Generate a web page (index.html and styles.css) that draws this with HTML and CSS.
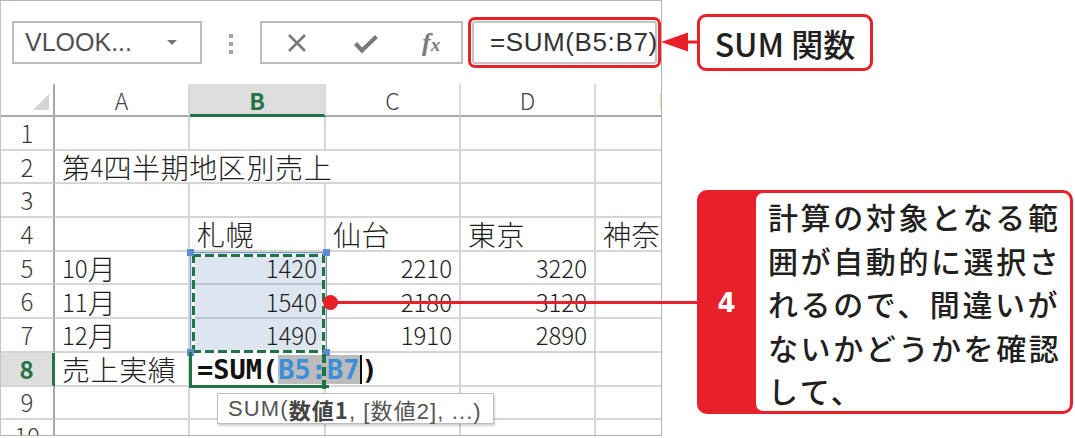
FILE: index.html
```html
<!DOCTYPE html>
<html lang="ja">
<head>
<meta charset="utf-8">
<link rel="stylesheet" href="styles.css">
</head>
<body>
<div class="page">
  <div class="excel">
    <div class="fbar">
      <div class="namebox"><span>VLOOK...</span><span class="dd"></span></div>
      <div class="grip"><i></i><i></i><i></i></div>
      <div class="btns">
        <svg class="ic-x" width="20" height="18" viewBox="0 0 20 18"><path d="M2 1 L18 17 M18 1 L2 17" stroke="#7a7a7a" stroke-width="2.6" fill="none"/></svg>
        <svg class="ic-ok" width="26" height="20" viewBox="0 0 26 20"><path d="M2.5 9.5 L9 16.5 L23.5 2.5" stroke="#7a7a7a" stroke-width="4.2" fill="none"/></svg>
        <span class="fx"><i>f</i><i class="x">x</i></span>
      </div>
      <div class="formula">=SUM(B5:B7)</div>
    </div>
    <div class="gridwrap">
      <div class="grid">
        <div class="h corner"><span class="tri"></span></div>
        <div class="h">A</div>
        <div class="h on">B</div>
        <div class="h">C</div>
        <div class="h">D</div>
        <div class="h">E</div>

        <div class="r">1</div><div class="c"></div><div class="c"></div><div class="c"></div><div class="c"></div><div class="c"></div>

        <div class="r">2</div><div class="c wide">第<span class="d">4</span>四半期地区別売上</div><div class="c"></div><div class="c"></div>

        <div class="r">3</div><div class="c"></div><div class="c"></div><div class="c"></div><div class="c"></div><div class="c"></div>

        <div class="r">4</div><div class="c"></div><div class="c">札幌</div><div class="c">仙台</div><div class="c">東京</div><div class="c">神奈川</div>

        <div class="r">5</div><div class="c"><span class="d">10</span>月</div><div class="c n sel">1420</div><div class="c n">2210</div><div class="c n">3220</div><div class="c"></div>

        <div class="r">6</div><div class="c"><span class="d">11</span>月</div><div class="c n sel">1540</div><div class="c n">2180</div><div class="c n">3120</div><div class="c"></div>

        <div class="r">7</div><div class="c"><span class="d">12</span>月</div><div class="c n sel">1490</div><div class="c n">1910</div><div class="c n">2890</div><div class="c"></div>

        <div class="r on">8</div><div class="c">売上実績</div><div class="c edit"><span class="ftext">=SUM(<span class="hl">B5:B7</span><span class="caret"></span>)</span></div><div class="c"></div><div class="c"></div><div class="c"></div>

        <div class="r">9</div><div class="c"></div><div class="c"></div><div class="c"></div><div class="c"></div><div class="c"></div>

        <div class="r">10</div><div class="c"></div><div class="c"></div><div class="c"></div><div class="c"></div><div class="c"></div>
      </div>

      <div class="range">
        <span class="ant top"></span><span class="ant bottom"></span><span class="ant left"></span><span class="ant right"></span>
        <span class="hd tl"></span><span class="hd tr"></span><span class="hd bl"></span><span class="hd br"></span>
      </div>
      <div class="active"></div>
      <div class="ant-edit"></div>
      <div class="tip">SUM(<b>数値1</b>, [数値2], ...)</div>
    </div>
  </div>

  <svg class="arrow" width="40" height="25" viewBox="0 0 40 25"><polygon points="1,12 28,2.5 28,21.5" fill="#e8202a"/><rect x="27" y="10.5" width="11" height="3" fill="#e8202a"/></svg>
  <div class="label">SUM 関数</div>

  <div class="lead"></div>
  <div class="callout">
    <div class="tab">4</div>
    <div class="ctext">計算の対象となる範<br>囲が自動的に選択さ<br>れるので、間違いが<br>ないかどうかを確認<br>して、</div>
  </div>
</div>
</body>
</html>
```
FILE: styles.css
```css
* { box-sizing: border-box; margin: 0; padding: 0; }
body { margin: 0; background: #fff; }

.page {
  position: relative;
  width: 1075px;
  height: 438px;
  overflow: hidden;
  background: #fff;
  font-family: "Noto Sans CJK JP", sans-serif;
}

/* ---------- Excel panel ---------- */
.excel {
  width: 662px;
  height: 436px;
  border: 1px solid #b3b3b3;
  border-left-color: #b9cbbf;
  display: flex;
  flex-direction: column;
  background: #fff;
}

.fbar {
  flex: none;
  height: 83px;
  display: flex;
  align-items: flex-start;
  padding: 20px 0 0 11px;
}

.namebox {
  width: 190px;
  height: 43px;
  border: 2px solid #bdbdbd;
  display: flex;
  align-items: center;
  padding-left: 11px;
  font-family: "Liberation Sans", sans-serif;
  font-size: 25px;
  color: #505050;
}
.dd {
  margin-left: auto;
  margin-right: 23px;
  width: 0;
  height: 0;
  border-left: 5px solid transparent;
  border-right: 5px solid transparent;
  border-top: 5px solid #777;
}

.grip {
  margin: 13px 0 0 27px;
  display: flex;
  flex-direction: column;
  gap: 4px;
}
.grip i { display: block; width: 4px; height: 4px; background: #a3a3a3; }

.btns {
  margin-left: 27px;
  width: 203px;
  height: 43px;
  border: 2px solid #bdbdbd;
  display: flex;
  align-items: center;
  padding-left: 25px;
}
.ic-x { margin-top: 1px; }
.ic-ok { margin-left: 46px; margin-top: 3px; }
.fx {
  margin-left: 43px;
  font-family: "Liberation Serif", serif;
  font-weight: bold;
  color: #7a7a7a;
  font-size: 26px;
  line-height: 1;
}
.fx .x { font-size: 19px; }

.formula {
  margin-left: 9px;
  width: 185px;
  height: 43px;
  border: 2px solid #c4c4c4;
  outline: 3px solid #e8202a;
  outline-offset: 1px;
  border-radius: 3px;
  display: flex;
  align-items: center;
  padding-left: 16px;
  font-family: "Liberation Sans", sans-serif;
  font-size: 26px;
  letter-spacing: 0.6px;
  color: #333;
}

/* ---------- grid ---------- */
.gridwrap {
  position: relative;
  flex: none;
  height: 351px;
  overflow: hidden;
}
.grid {
  display: grid;
  grid-template-columns: 54px 135px 136px 135px 135px 140px;
  grid-template-rows: 33px repeat(10, 33.7px);
  width: 700px;
}
.grid > div {
  display: flex;
  align-items: center;
  line-height: 1;
  white-space: nowrap;
  min-width: 0;
}

.h {
  justify-content: center;
  border-right: 2px solid #dadada;
  border-bottom: 2px solid #a9a9a9;
  font-size: 23px;
  font-weight: 300;
  color: #444;
  padding-top: 2px;
}
.h.on {
  background: #dedede;
  border-bottom: 3px solid #217346;
  color: #217346;
  font-weight: 700;
}
.corner { position: relative; border-right: 2px solid #a9a9a9; }
.tri {
  position: absolute;
  right: 4px;
  bottom: 5px;
  width: 0;
  height: 0;
  border-left: 16px solid transparent;
  border-bottom: 16px solid #d3d3d3;
}

.r {
  justify-content: center;
  border-right: 2px solid #a9a9a9;
  border-bottom: 2px solid #d6d6d6;
  font-size: 24px;
  font-weight: 300;
  color: #3a3a3a;
}
.r.on {
  background: #dedede;
  border-right: 3px solid #217346;
  color: #217346;
  font-weight: 700;
}

.c {
  border-right: 2px solid #d6d6d6;
  border-bottom: 2px solid #d6d6d6;
  padding-left: 7px;
  font-size: 28px;
  font-weight: 300;
  letter-spacing: 0.6px;
  color: #1e1e1e;
  padding-top: 1px;
}
.c .d { font-size: 24px; letter-spacing: 0; }
.c.wide { grid-column: span 3; }
.c.n {
  justify-content: flex-end;
  padding-right: 7px;
  font-size: 24px;
  letter-spacing: 0;
}
.c.sel { background: #dde5f0; border-bottom-color: #bac4d2; }

.c.edit { position: relative; overflow: visible; padding-left: 7px; }
.ftext {
  position: relative;
  z-index: 2;
  background: #fff;
  font-family: "DejaVu Sans Mono", monospace;
  font-weight: bold;
  font-size: 27px;
  letter-spacing: 0;
  color: #111;
  line-height: 29px;
  display: inline-flex;
  align-items: center;
}
.hl { background: #bcbcbc; color: #3b8ed8; }
.caret { display: inline-block; width: 2px; height: 29px; background: #111; }

/* selection overlay B5:B7 */
.range {
  position: absolute;
  left: 189px;
  top: 168px;
  width: 137px;
  height: 101px;
  border: 1px solid #6f96cf;
  z-index: 3;
}
.ant { position: absolute; }
.ant.top, .ant.bottom {
  left: 1px; right: 1px; height: 3px;
  background: repeating-linear-gradient(90deg, #217346 0 9px, #fff 9px 13px);
}
.ant.top { top: 1px; }
.ant.bottom { bottom: -1px; }
.ant.left, .ant.right {
  top: 1px; bottom: 1px; width: 3px;
  background: repeating-linear-gradient(180deg, #217346 0 9px, #fff 9px 13px);
}
.ant.left { left: 1px; }
.ant.right { right: 1px; }
.hd {
  position: absolute;
  width: 7px;
  height: 7px;
  background: #5d8cd0;
}
.hd.tl { left: -4px; top: -4px; }
.hd.tr { right: -4px; top: -4px; }
.hd.bl { left: -4px; bottom: -4px; }
.hd.br { right: -4px; bottom: -4px; }

.active {
  position: absolute;
  left: 188px;
  top: 268px;
  width: 140px;
  height: 36px;
  border-left: 3px solid #217346;
  border-bottom: 3px solid #217346;
  z-index: 3;
}
.ant-edit {
  position: absolute;
  left: 321px;
  top: 270px;
  width: 4px;
  height: 36px;
  background: repeating-linear-gradient(180deg, #217346 0 9px, transparent 9px 13px);
  z-index: 3;
}

.tip {
  position: absolute;
  left: 216px;
  top: 309px;
  width: 277px;
  height: 31px;
  background: #fff;
  border: 1px solid #bdbdbd;
  box-shadow: 1px 2px 2px rgba(0,0,0,0.18);
  z-index: 4;
  padding: 0 0 0 10px;
  display: flex;
  align-items: center;
  font-family: "Liberation Sans", "Noto Sans CJK JP", sans-serif;
  font-size: 22px;
  letter-spacing: 1.1px;
  color: #555;
  white-space: nowrap;
}
.tip b { font-family: "Noto Sans CJK JP", sans-serif; font-weight: 700; color: #444; }

/* ---------- annotations ---------- */
.arrow { position: absolute; left: 660px; top: 30px; }

.label {
  position: absolute;
  left: 697px;
  top: 14px;
  width: 176px;
  height: 57px;
  border: 3px solid #e8202a;
  border-radius: 9px;
  background: #fff;
  display: flex;
  align-items: center;
  justify-content: center;
  font-family: "Noto Sans CJK JP", sans-serif;
  font-weight: 500;
  font-size: 32px;
  color: #231f20;
  line-height: 1;
  white-space: nowrap;
}

.lead {
  position: absolute;
  left: 330px;
  top: 301px;
  width: 368px;
  height: 3px;
  background: #e8202a;
  z-index: 5;
}
.lead::before {
  content: "";
  position: absolute;
  left: -7px;
  top: -6px;
  width: 15px;
  height: 15px;
  border-radius: 50%;
  background: #e8202a;
}

.callout {
  position: absolute;
  left: 697px;
  top: 190px;
  width: 376px;
  height: 224px;
  border-radius: 10px;
  background: #e8202a;
  display: flex;
  padding: 3px 3px 3px 0;
  z-index: 6;
}
.tab {
  flex: none;
  width: 59px;
  display: flex;
  align-items: center;
  justify-content: center;
  color: #fff;
  font-family: "DejaVu Sans", sans-serif;
  font-weight: bold;
  font-size: 26px;
  padding-top: 1px;
}
.ctext {
  flex: 1;
  background: #fff;
  border-radius: 7px;
  padding: 2px 0 0 12px;
  font-family: "Noto Sans CJK JP", sans-serif;
  font-weight: 500;
  font-size: 30px;
  letter-spacing: 2.6px;
  line-height: 43.5px;
  color: #231f20;
  white-space: nowrap;
}
```
